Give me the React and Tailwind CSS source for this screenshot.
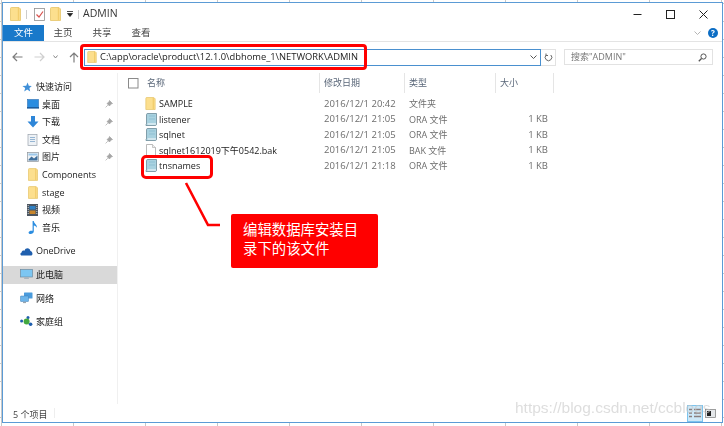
import React from "react";

const font = { fontFamily: '"Open Sans","Noto Sans CJK SC",sans-serif' };

const Folder = ({ w = 11, h = 14, className = "" }) => (
  <svg width={w} height={h} viewBox="0 0 11 14" className={className}>
    <path d="M0.5 1.5 Q0.5 0.5 1.5 0.5 H9 L10.5 2 V13.5 H0.5 Z" fill="#fcdf8e" stroke="#e6c56a" strokeWidth="0.8" />
    <path d="M8.5 1 V13" stroke="#f2cd6d" strokeWidth="1.4" />
  </svg>
);

const Note = () => (
  <svg width="12" height="13" viewBox="0 0 12 13">
    <path d="M1.5 1.5 Q1.5 .5 3 .5 H11.5 V11 Q11.5 12.5 10 12.5 H1 Q.5 12 1.5 11 Z" fill="#a9d2e0" stroke="#6c8a98" strokeWidth=".8" />
    <path d="M2.5 11 H11" stroke="#eef6f9" strokeWidth="1.2" />
    <path d="M4 3 H10 M4 6 H10" stroke="#8fc0d3" strokeWidth="1" />
  </svg>
);

const Plain = () => (
  <svg width="10" height="13" viewBox="0 0 10 13">
    <path d="M.5 .5 H6.5 L9.5 3.5 V12.5 H.5 Z" fill="#fff" stroke="#a8a8a8" strokeWidth=".8" />
    <path d="M6.5 .5 V3.5 H9.5" fill="#eee" stroke="#a8a8a8" strokeWidth=".6" />
  </svg>
);

const Pin = () => (
  <svg width="8" height="8" viewBox="0 0 8 8" className="ml-auto">
    <path d="M4.5 .5 L7.5 3.5 L6 4 L4.5 6 L2 3.5 L4 2 Z M2.8 5.2 L.6 7.4" fill="#a5a5a5" stroke="#a5a5a5" strokeWidth=".7" />
  </svg>
);

const SideIcons = {
  star: (
    <svg width="10" height="10" viewBox="0 0 10 10"><path d="M5.6.5 L6.8 3.7 L9.8 3.9 L7.4 6 L8.2 9.4 L5.2 7.6 L2.2 9.4 L3.2 6 L.4 3.9 L4.2 3.7 Z" fill="#3f8fd8" /></svg>
  ),
  desktop: (
    <svg width="12" height="10" viewBox="0 0 12 10"><rect x=".5" y=".5" width="11" height="8" fill="#2b8de0" stroke="#2a6fb3" strokeWidth=".6" /><rect x="0" y="8" width="12" height="1.6" fill="#1d5d9e" /></svg>
  ),
  down: (
    <svg width="12" height="12" viewBox="0 0 12 12"><path d="M4 0 H8 V5.5 H11.5 L6 11.5 L.5 5.5 H4 Z" fill="#2e86d8" /></svg>
  ),
  doc: (
    <svg width="11" height="12" viewBox="0 0 11 12"><rect x="1" y=".5" width="9" height="11" fill="#eef2f6" stroke="#9aa3ad" strokeWidth=".7" /><path d="M3 3.5 H8 M3 5.5 H8 M3 7.5 H8" stroke="#7fa6cc" strokeWidth=".8" /></svg>
  ),
  pic: (
    <svg width="12" height="10" viewBox="0 0 12 10"><rect x=".5" y=".5" width="11" height="9" fill="#eef2f5" stroke="#8d949b" strokeWidth=".7" /><path d="M1.5 7.5 L4.5 4.5 L7 6.5 L10.5 3.5 V8.5 H1.5 Z" fill="#3f6f9c" /><rect x="1.5" y="1.5" width="9" height="2" fill="#9cc7ea" /></svg>
  ),
  folder: <Folder w={10} h={13} />,
  video: (
    <svg width="11" height="12" viewBox="0 0 11 12"><rect width="11" height="12" fill="#4b5560" /><rect x="2.5" y="2" width="6" height="3.5" fill="#2f80c4" /><rect x="2.5" y="6.5" width="6" height="3.5" fill="#c8862c" /><path d="M1.2 1 V11 M9.8 1 V11" stroke="#c9ced3" strokeWidth="1" strokeDasharray="1 1" /></svg>
  ),
  music: (
    <svg width="10" height="13" viewBox="0 0 10 13"><path d="M4.6 0 H5.8 C6 3 9.5 3.5 8.8 6.8 C8.2 5.3 7.2 4.6 5.8 4.4 V10.5 C5.8 12 4.2 13 2.6 13 C1.2 13 .4 12.2 .6 11.2 C.9 10 2.8 9.3 4.6 9.8 Z" fill="#2b8de0" /></svg>
  ),
  cloud: (
    <svg width="13" height="9" viewBox="0 0 13 9"><path d="M1.8 8.5 C.2 8.5 -.3 6 1.6 5.4 C1.8 3.4 3.8 3 4.6 3.8 C5.4 .4 10 .6 10.4 4 C12.6 4.2 13.6 8.5 10.6 8.5 Z" fill="#1f5fae" /></svg>
  ),
  pc: (
    <svg width="13" height="11" viewBox="0 0 13 11"><rect x=".5" y=".5" width="12" height="7.5" fill="#7cc6f2" stroke="#6d8aa0" strokeWidth=".7" /><path d="M4.5 8 H8.5 L9 10 H4 Z" fill="#aab4bc" /></svg>
  ),
  net: (
    <svg width="13" height="12" viewBox="0 0 13 12"><rect x="4" y=".5" width="8.5" height="6" rx=".5" fill="#4a9bdc" /><rect x=".5" y="4" width="8" height="5.5" rx=".5" fill="#6db5ea" stroke="#3e7fb6" strokeWidth=".5" /><path d="M3 10.5 H6" stroke="#9ba5ad" strokeWidth="1.2" /></svg>
  ),
  home: (
    <svg width="13" height="11" viewBox="0 0 13 11"><circle cx="1.6" cy="5" r="1.5" fill="#1f5fae" /><circle cx="8" cy="1.6" r="1.5" fill="#1f5fae" /><circle cx="10.6" cy="8.2" r="1.8" fill="#1f5fae" /><circle cx="6.6" cy="5.6" r="3" fill="#43a83f" /></svg>
  ),
};

const Side = ({ icon, label, pin, top, mt = "", active }) => (
  <div className={`flex h-[17.6px] items-center ${top ? "pl-[17px]" : "pl-[23px]"} gap-[3px] ${mt} pr-[4px] text-[9px] text-[#222] ${active ? "bg-[#d9d9d9]" : ""}`}>
    <span className="flex w-[13px] justify-center">{SideIcons[icon]}</span>
    <span>{label}</span>
    {pin && <Pin />}
  </div>
);

const files = [
  ["f", "SAMPLE", "2016/12/1 20:42", "文件夹", ""],
  ["n", "listener", "2016/12/1 21:05", "ORA 文件", "1 KB"],
  ["n", "sqlnet", "2016/12/1 21:05", "ORA 文件", "1 KB"],
  ["p", "sqlnet1612019下午0542.bak", "2016/12/1 21:05", "BAK 文件", "1 KB"],
  ["n", "tnsnames", "2016/12/1 21:18", "ORA 文件", "1 KB"],
];

export default function App() {
  return (
    <div
      className="relative h-[426px] w-[724px] overflow-hidden bg-white bg-[linear-gradient(90deg,#c8c8c8_1px,transparent_1px),linear-gradient(180deg,#c8c8c8_1px,transparent_1px)] bg-[size:72px_18px] bg-[position:1px_3px] pl-[2px] pt-[2px]"
      style={font}
    >
      <div className="flex h-[421px] w-[721px] flex-col border border-[#5b9bd5] bg-white blur-[0.3px]">
        {/* title bar */}
        <div className="flex h-[22px] shrink-0 items-center pl-[7px] text-[10.5px] text-[#333]">
          <Folder />
          <span className="ml-[5px] h-[9px] w-px bg-[#ccc]" />
          <svg width="11" height="13" viewBox="0 0 11 13" className="ml-[7px]">
            <rect x=".5" y=".5" width="10" height="12" fill="#fff" stroke="#8f8f8f" strokeWidth=".8" />
            <path d="M2.5 6.5 L5 9 L9 3.5" fill="none" stroke="#d9534f" strokeWidth="1.2" />
          </svg>
          <Folder className="ml-[5px]" />
          <svg width="6" height="6" viewBox="0 0 6 6" className="ml-[6px]">
            <path d="M0 0.5 H6 M.5 2.5 H5.5 L3 5.5 Z" stroke="#222" strokeWidth=".8" fill="#222" />
          </svg>
          <span className="ml-[5px] h-[9px] w-px bg-[#ccc]" />
          <span className="ml-[4px]">ADMIN</span>
          <svg width="9" height="9" viewBox="0 0 9 9" className="ml-auto">
            <path d="M.5 4.5 H8.5" stroke="#222" strokeWidth="1" />
          </svg>
          <svg width="9" height="9" viewBox="0 0 9 9" className="ml-[24px]">
            <rect x=".5" y=".5" width="8" height="8" fill="none" stroke="#222" strokeWidth="1" />
          </svg>
          <svg width="9" height="9" viewBox="0 0 9 9" className="ml-[24px] mr-[14px]">
            <path d="M.5 .5 L8.5 8.5 M8.5 .5 L.5 8.5" stroke="#222" strokeWidth="1" />
          </svg>
        </div>
        {/* tabs */}
        <div className="flex h-[17px] shrink-0 items-center border-b border-[#e4e4e4] text-[9.5px] text-[#444]">
          <div className="flex h-full w-[41px] items-center justify-center bg-[#1979ca] text-white">文件</div>
          <div className="ml-[9px] w-[20px] text-center">主页</div>
          <div className="ml-[19px] w-[20px] text-center">共享</div>
          <div className="ml-[19px] w-[20px] text-center">查看</div>
          <svg width="7" height="5" viewBox="0 0 7 5" className="ml-auto mr-[7px]">
            <path d="M.5 .5 L3.5 3.5 L6.5 .5" fill="none" stroke="#b5b5b5" strokeWidth="1" />
          </svg>
          <div className="mr-[4px] flex h-[10px] w-[10px] items-center justify-center rounded-full bg-[#0c6dc4] text-[8px] font-bold leading-none text-white">?</div>
        </div>
        {/* nav */}
        <div className="flex h-[31px] shrink-0 items-center pb-[1px] pl-[9px] text-[#6d6d6d]">
          <svg width="11" height="10" viewBox="0 0 11 10"><path d="M10.5 5 H1 M5 1 L1 5 L5 9" fill="none" stroke="#7d7d7d" strokeWidth="1.2" /></svg>
          <svg width="11" height="10" viewBox="0 0 11 10" className="ml-[11px]"><path d="M.5 5 H10 M6 1 L10 5 L6 9" fill="none" stroke="#cfcfcf" strokeWidth="1.2" /></svg>
          <svg width="5" height="4" viewBox="0 0 5 4" className="ml-[8px]"><path d="M.5 .5 L2.5 3 L4.5 .5" fill="none" stroke="#888" strokeWidth="1" /></svg>
          <svg width="10" height="11" viewBox="0 0 10 11" className="ml-[11px]"><path d="M5 10.5 V1 M1 5 L5 1 L9 5" fill="none" stroke="#7d7d7d" strokeWidth="1.2" /></svg>
          <div className="ml-[5px] flex h-[17px] w-[457px] items-center border border-[#4a90cf] pl-[2px] pr-[3px] text-[9.35px] text-[#222]">
            <Folder w={10} h={12} />
            <span className="ml-[3px]">C:\app\oracle\product\12.1.0\dbhome_1\NETWORK\ADMIN</span>
            <svg width="7" height="5" viewBox="0 0 7 5" className="ml-auto"><path d="M.5 .5 L3.5 3.5 L6.5 .5" fill="none" stroke="#555" strokeWidth="1" /></svg>
          </div>
          <div className="flex h-[17px] w-[15px] items-center justify-center border border-l-0 border-[#e2e2e2]">
            <svg width="9" height="9" viewBox="0 0 9 9"><path d="M6.8 2 A3.3 3.3 0 1 1 2.2 2 M2 .5 V2.5 H4" fill="none" stroke="#666" strokeWidth="1" /></svg>
          </div>
          <div className="ml-[8px] flex h-[16px] w-[149px] items-center justify-between border border-[#e2e2e2] pl-[6px] pr-[5px] text-[9px] text-[#777]">
            <span>搜索"ADMIN"</span>
            <svg width="9" height="9" viewBox="0 0 9 9"><circle cx="5.5" cy="3.5" r="2.6" fill="none" stroke="#555" strokeWidth="1" /><path d="M3.5 5.5 L.8 8.2" stroke="#555" strokeWidth="1.3" /></svg>
          </div>
        </div>
        {/* body */}
        <div className="flex min-h-0 flex-1">
          <aside className="w-[115px] shrink-0 border-r border-[#f0f0f0] pt-[5px]">
            <Side icon="star" label="快速访问" top />
            <Side icon="desktop" label="桌面" pin />
            <Side icon="down" label="下载" pin />
            <Side icon="doc" label="文档" pin />
            <Side icon="pic" label="图片" pin />
            <Side icon="folder" label="Components" />
            <Side icon="folder" label="stage" />
            <Side icon="video" label="视频" />
            <Side icon="music" label="音乐" />
            <Side icon="cloud" label="OneDrive" top mt="mt-[6px]" />
            <Side icon="pc" label="此电脑" top mt="mt-[6px]" active />
            <Side icon="net" label="网络" top mt="mt-[6px]" />
            <Side icon="home" label="家庭组" top mt="mt-[6px]" />
          </aside>
          <main className="flex-1 pl-[10px]">
            <div className="flex items-center">
              <svg width="11" height="11" viewBox="0 0 11 11" className="mr-[8px] shrink-0">
                <rect x=".5" y=".5" width="9.5" height="9.5" fill="#fff" stroke="#8a8a8a" strokeWidth="1" />
              </svg>
              <div className="grid h-[20px] grid-cols-[172px_85px_91px_59px] items-center text-[9px] text-[#5a6779]">
                <div className="h-full leading-[20px]">名称</div>
                <div className="h-full border-l border-[#e5e5e5] pl-[4px] leading-[20px]">修改日期</div>
                <div className="h-full border-l border-[#e5e5e5] pl-[4px] leading-[20px]">类型</div>
                <div className="h-full border-x border-[#e5e5e5] pl-[4px] leading-[20px]">大小</div>
              </div>
            </div>
            <div className="mt-[3px] pl-[16px]">
              {files.map(([k, name, date, type, size]) => (
                <div key={name} className="flex h-[15.5px] items-center text-[9.5px]">
                  <span className="flex w-[13px] shrink-0 justify-center">
                    {k === "f" ? <Folder w={11} h={13} /> : k === "n" ? <Note /> : <Plain />}
                  </span>
                  <div className="grid grid-cols-[166px_85px_91px_48px] items-center pl-[1px]">
                    <span className="whitespace-nowrap pl-[1px] text-[9px] text-[#222]">{name}</span>
                    <span className="text-[#6d6d6d]">{date}</span>
                    <span className="text-[9px] text-[#6d6d6d]">{type}</span>
                    <span className="text-right text-[#6d6d6d]">{size}</span>
                  </div>
                </div>
              ))}
            </div>
          </main>
        </div>
        {/* status */}
        <div className="flex h-[18px] shrink-0 items-center pl-[10px] pr-[6px] text-[9px] text-[#444]">
          <span className="mt-[3px]">5 个项目</span>
          <span className="ml-[7px] h-[10px] w-px bg-[#eee]" />
          <div className="ml-auto flex h-[17px] w-[16px] items-center justify-center border border-[#7cc4ee] bg-[#cde8f8]">
            <svg width="12" height="10" viewBox="0 0 12 10"><path d="M0 1.5 H3 M0 5 H3 M0 8.5 H3 M5 1.5 H12 M5 5 H12 M5 8.5 H12" stroke="#8a7f7f" strokeWidth="1.6" /></svg>
          </div>
          <svg width="11" height="9" viewBox="0 0 11 9" className="ml-[2px]"><rect x=".5" y=".5" width="10" height="8" fill="#e5e8ea" stroke="#7a7a7a" strokeWidth=".7" /><rect x="2" y="2" width="4" height="5" fill="#222" /></svg>
        </div>
      </div>

      {/* annotations lying over the window */}
      <div className="absolute left-[80px] top-[44px] h-[26px] w-[287px] rounded-[4px] border-[3px] border-[#ff0000]" />
      <div className="absolute left-[141px] top-[155px] h-[24px] w-[72px] rounded-[5px] border-[3px] border-[#ff0000]" />
      <svg width="50" height="50" viewBox="0 0 50 50" className="absolute left-[180px] top-[180px]">
        <path d="M6 3 L28 45 H40" fill="none" stroke="#ff0000" strokeWidth="2.6" />
      </svg>
      <div className="absolute left-[231px] top-[214px] h-[54px] w-[147px] rounded-[2px] bg-[#ff0000] pl-[12px] pr-[12px] pt-[5px] text-[14.4px] leading-[19px] text-white" style={{ fontFamily: '"Noto Sans CJK SC",sans-serif' }}>
        编辑数据库安装目录下的该文件
      </div>
      <div className="absolute left-[515px] top-[398px] text-[15.5px] leading-[20px] text-[#c8c8c8] opacity-60" style={{ fontFamily: '"Liberation Sans",sans-serif' }}>
        https://blog.csdn.net/ccblogs
      </div>
    </div>
  );
}
